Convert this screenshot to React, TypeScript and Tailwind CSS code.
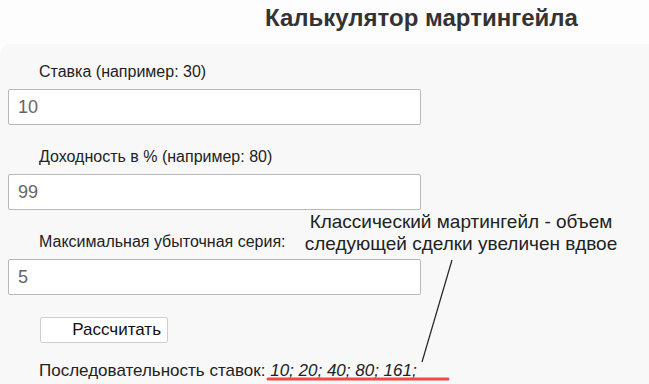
export default function App() {
  return (
    <div className="relative w-[649px] h-[384px] overflow-hidden bg-[#fdfdfd] font-['Liberation_Sans',Arial,sans-serif] text-[#222]">
      <h1 className="h-[44px] pl-[265px] pt-[5px] text-[24px] leading-[26px] font-bold text-[#333]">
        Калькулятор мартингейла
      </h1>
      <div className="bg-[#f8f8f8] rounded-tl-[10px] pt-[20px] h-[340px]">
        <Field label="Ставка (например: 30)" value="10" />
        <div className="h-[24px]" />
        <Field label="Доходность в % (например: 80)" value="99" />
        <div className="h-[24px]" />
        <Field label="Максимальная убыточная серия:" value="5" />
        <div className="pl-[40px] pt-[22px]">
          <button className="w-[128px] h-[26px] border border-[#cfcfcf] rounded-[2px] bg-white text-[17px] leading-[20px] text-[#111] text-right pr-[6px]">
            Рассчитать
          </button>
        </div>
        <p className="pl-[39px] pt-[20px] text-[17px] leading-[16px]">
          Последовательность ставок: <i>10; 20; 40; 80; 161;</i>
        </p>
      </div>

      <div className="absolute left-[300px] top-[211px] w-[322px] text-center text-[19px] leading-[22px] text-[#222]">
        Классический мартингейл - объем
        <br />
        следующей сделки увеличен вдвое
      </div>
      <svg className="absolute left-0 top-0" width="649" height="384">
        <line x1="452" y1="260" x2="422" y2="362" stroke="#222" strokeWidth="1.2" />
        <line x1="268" y1="379" x2="448" y2="379" stroke="#f34848" strokeWidth="3" strokeLinecap="round" />
      </svg>
    </div>
  );
}

function Field({ label, value }: { label: string; value: string }) {
  return (
    <div>
      <div className="pl-[39px] text-[16px] leading-[16px]">{label}</div>
      <div className="pl-[8px] pt-[9px]">
        <div className="w-[413px] h-[36px] border border-[#b8b8b8] rounded-[2px] bg-white px-[9px] flex items-center text-[18px] text-[#666]">
          {value}
        </div>
      </div>
    </div>
  );
}
